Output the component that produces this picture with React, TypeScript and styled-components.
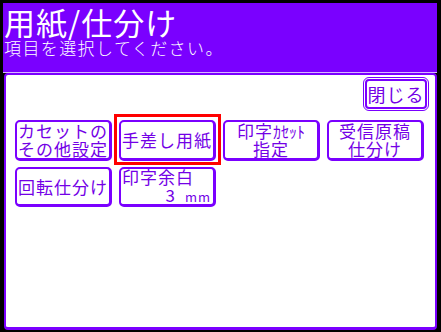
import * as React from 'react'
import styled, { createGlobalStyle } from 'styled-components'

const PURPLE = '#7a00ff'
const INK = '#7300e6'

const GlobalStyle = createGlobalStyle`
    html, body {
        margin: 0;
        padding: 0;
        background: #000;
    }
    body {
        font-family: "Noto Sans CJK JP", "Noto Sans", sans-serif;
    }
`

const Screen = styled.div`
    width: 441px;
    height: 332px;
    box-sizing: border-box;
    padding: 3px 4px 2px 3px;
    background: #000;
    display: flex;
    flex-direction: column;
`

const Header = styled.div`
    height: 70px;
    flex: none;
    background: ${PURPLE};
    color: #fff;
    padding: 0 0 0 1px;
    box-sizing: border-box;
    border-bottom: 1px solid #d9b8ff;
`

const Title = styled.div`
    font-size: 31px;
    line-height: 34px;
    letter-spacing: 1px;
    margin-top: 2px;
    white-space: nowrap;
`

const Subtitle = styled.div`
    font-size: 17px;
    line-height: 18px;
    letter-spacing: 1.4px;
    font-weight: 300;
    white-space: nowrap;
`

const Panel = styled.div`
    flex: 1;
    background: #fff;
    border: 2px solid ${PURPLE};
    border-bottom-width: 3px;
    border-radius: 4px;
    margin-left: 1px;
    padding: 3px 6px 0 9px;
    display: flex;
    flex-direction: column;
`

const TopBar = styled.div`
    display: flex;
    justify-content: flex-end;
    height: 42px;
`

const CloseButton = styled.div`
    width: 58px;
    height: 26px;
    margin: 1px 2px 0 0;
    border: 2px solid ${PURPLE};
    border-radius: 4px;
    outline: 1px solid ${PURPLE};
    outline-offset: 1px;
    color: ${INK};
    font-size: 18px;
    line-height: 26px;
    text-align: center;
    letter-spacing: 1px;
`

const Grid = styled.div`
    display: grid;
    grid-template-columns: repeat(4, 97px);
    grid-template-rows: 41px 40px;
    column-gap: 7px;
    row-gap: 6px;
`

const Key = styled.div<{ $selected?: boolean; $align?: string }>`
    position: relative;
    box-sizing: border-box;
    background: #fff;
    border: 2px solid ${PURPLE};
    border-right-width: 3px;
    border-bottom-width: 3px;
    border-radius: 5px;
    color: ${INK};
    font-size: 17px;
    line-height: 18px;
    letter-spacing: 1px;
    display: flex;
    flex-direction: column;
    justify-content: center;
    align-items: ${p => p.$align || 'center'};
    padding: 0 1px;
    white-space: nowrap;

    ${p => p.$selected && `
        &::after {
            content: '';
            position: absolute;
            left: -7px;
            top: -8px;
            right: -8px;
            bottom: -7px;
            border: 3px solid #f00;
        }
    `}
`

const Line = styled.span<{ $right?: boolean }>`
    display: block;
    align-self: ${p => p.$right ? 'flex-end' : 'auto'};
    padding-right: ${p => p.$right ? '1px' : '0'};
`

const Half = styled.span`
    font-size: 16px;
    letter-spacing: 0;
`

const Unit = styled.span`
    font-size: 13px;
    margin-left: 9px;
`

const App = () => (
    <>
        <GlobalStyle />
        <Screen>
            <Header>
                <Title>用紙/仕分け</Title>
                <Subtitle>項目を選択してください。</Subtitle>
            </Header>
            <Panel>
                <TopBar>
                    <CloseButton>閉じる</CloseButton>
                </TopBar>
                <Grid>
                    <Key $align="flex-start">
                        <Line>カセットの</Line>
                        <Line>その他設定</Line>
                    </Key>
                    <Key $selected>
                        <Line>手差し用紙</Line>
                    </Key>
                    <Key>
                        <Line>印字<Half>ｶｾｯﾄ</Half></Line>
                        <Line>指定</Line>
                    </Key>
                    <Key>
                        <Line>受信原稿</Line>
                        <Line>仕分け</Line>
                    </Key>
                    <Key>
                        <Line>回転仕分け</Line>
                    </Key>
                    <Key $align="flex-start">
                        <Line>印字余白</Line>
                        <Line $right>3<Unit>mm</Unit></Line>
                    </Key>
                </Grid>
            </Panel>
        </Screen>
    </>
)

export default App
